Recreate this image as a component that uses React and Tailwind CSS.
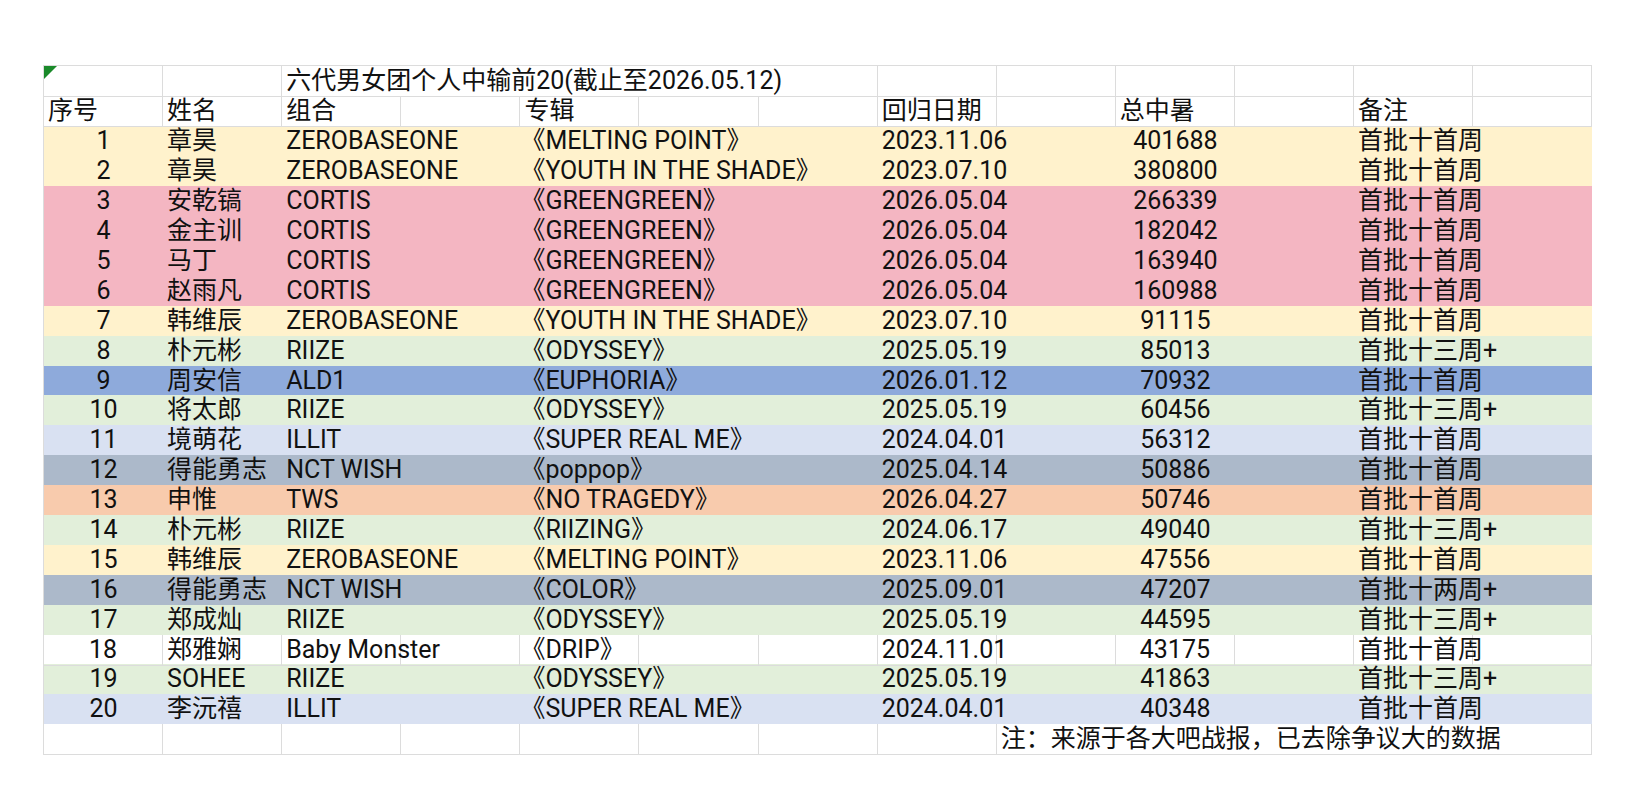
const C = {
  y: "bg-[#fff2cc]",
  p: "bg-[#f4b6c2]",
  g: "bg-[#e2efda]",
  b: "bg-[#8eaadb]",
  l: "bg-[#d9e1f2]",
  s: "bg-[#acb9ca]",
  o: "bg-[#f8cbad]",
  w: "",
};

const rows = [
  ["1", "章昊", "ZEROBASEONE", "《MELTING POINT》", "2023.11.06", "401688", "首批十首周", "y"],
  ["2", "章昊", "ZEROBASEONE", "《YOUTH IN THE SHADE》", "2023.07.10", "380800", "首批十首周", "y"],
  ["3", "安乾镐", "CORTIS", "《GREENGREEN》", "2026.05.04", "266339", "首批十首周", "p"],
  ["4", "金主训", "CORTIS", "《GREENGREEN》", "2026.05.04", "182042", "首批十首周", "p"],
  ["5", "马丁", "CORTIS", "《GREENGREEN》", "2026.05.04", "163940", "首批十首周", "p"],
  ["6", "赵雨凡", "CORTIS", "《GREENGREEN》", "2026.05.04", "160988", "首批十首周", "p"],
  ["7", "韩维辰", "ZEROBASEONE", "《YOUTH IN THE SHADE》", "2023.07.10", "91115", "首批十首周", "y"],
  ["8", "朴元彬", "RIIZE", "《ODYSSEY》", "2025.05.19", "85013", "首批十三周+", "g"],
  ["9", "周安信", "ALD1", "《EUPHORIA》", "2026.01.12", "70932", "首批十首周", "b"],
  ["10", "将太郎", "RIIZE", "《ODYSSEY》", "2025.05.19", "60456", "首批十三周+", "g"],
  ["11", "境萌花", "ILLIT", "《SUPER REAL ME》", "2024.04.01", "56312", "首批十首周", "l"],
  ["12", "得能勇志", "NCT WISH", "《poppop》", "2025.04.14", "50886", "首批十首周", "s"],
  ["13", "申惟", "TWS", "《NO TRAGEDY》", "2026.04.27", "50746", "首批十首周", "o"],
  ["14", "朴元彬", "RIIZE", "《RIIZING》", "2024.06.17", "49040", "首批十三周+", "g"],
  ["15", "韩维辰", "ZEROBASEONE", "《MELTING POINT》", "2023.11.06", "47556", "首批十首周", "y"],
  ["16", "得能勇志", "NCT WISH", "《COLOR》", "2025.09.01", "47207", "首批十两周+", "s"],
  ["17", "郑成灿", "RIIZE", "《ODYSSEY》", "2025.05.19", "44595", "首批十三周+", "g"],
  ["18", "郑雅娴", "Baby Monster", "《DRIP》", "2024.11.01", "43175", "首批十首周", "w"],
  ["19", "SOHEE", "RIIZE", "《ODYSSEY》", "2025.05.19", "41863", "首批十三周+", "g"],
  ["20", "李沅禧", "ILLIT", "《SUPER REAL ME》", "2024.04.01", "40348", "首批十首周", "l"],
];

function Row({ cells, bg = "", lines, h = "h-[29.9px]" }) {
  const out = [];
  let col = 0;
  const byCol = {};
  cells.forEach((x) => (byCol[x.c] = x));
  while (col < 13) {
    const x = byCol[col];
    const span = x ? x.s || 1 : 1;
    out.push(
      <div
        key={col}
        style={{ gridColumn: `span ${span} / span ${span}` }}
        className={`${lines ? "border-r border-b border-[#dcdcdc]" : ""} ${
          x && x.center ? "text-center" : "pl-[4px]"
        } whitespace-nowrap overflow-visible leading-[30px] ${x && x.bgw ? "bg-white relative" : ""}`}
      >
        {x ? x.t : ""}
      </div>
    );
    col += span;
  }
  return (
    <div className={`grid grid-cols-[repeat(13,119.1px)] ${h} ${bg}`}>{out}</div>
  );
}

export default function App() {
  return (
    <div
      className="w-[1634px] h-[799px] bg-white text-[25px] text-[#111]"
      style={{ fontFamily: "Roboto, 'Noto Sans CJK SC', sans-serif" }}
    >
      <div className="pt-[65px] pl-[43px]">
        <div className="relative w-[1549px] border-l border-t border-[#dcdcdc]">
          <div className="absolute left-0 top-0 w-0 h-0 border-t-[13px] border-r-[13px] border-t-[#1a8a2a] border-r-transparent" />
          <Row
            lines
            h="h-[30.2px]"
            cells={[{ c: 2, s: 5, t: "六代男女团个人中输前20(截止至2026.05.12)", bgw: true }]}
          />
          <Row
            lines
            h="h-[30.2px]"
            cells={[
              { c: 0, t: "序号" },
              { c: 1, t: "姓名" },
              { c: 2, t: "组合" },
              { c: 4, t: "专辑" },
              { c: 7, t: "回归日期" },
              { c: 9, t: "总中暑" },
              { c: 11, t: "备注" },
            ]}
          />
          {rows.map((r) => (
            <Row
              key={r[0]}
              bg={C[r[7]]}
              lines={r[7] === "w"}
              cells={[
                { c: 0, t: r[0], center: true },
                { c: 1, t: r[1] },
                { c: 2, t: r[2] },
                { c: 4, t: <span className="-ml-[4px]">{r[3]}</span> },
                { c: 7, t: r[4] },
                { c: 9, t: r[5], center: true },
                { c: 11, t: r[6] },
              ]}
            />
          ))}
          <Row
            lines
            h="h-[31px]"
            cells={[{ c: 8, s: 5, t: "注：来源于各大吧战报，已去除争议大的数据", bgw: true }]}
          />
        </div>
      </div>
    </div>
  );
}
